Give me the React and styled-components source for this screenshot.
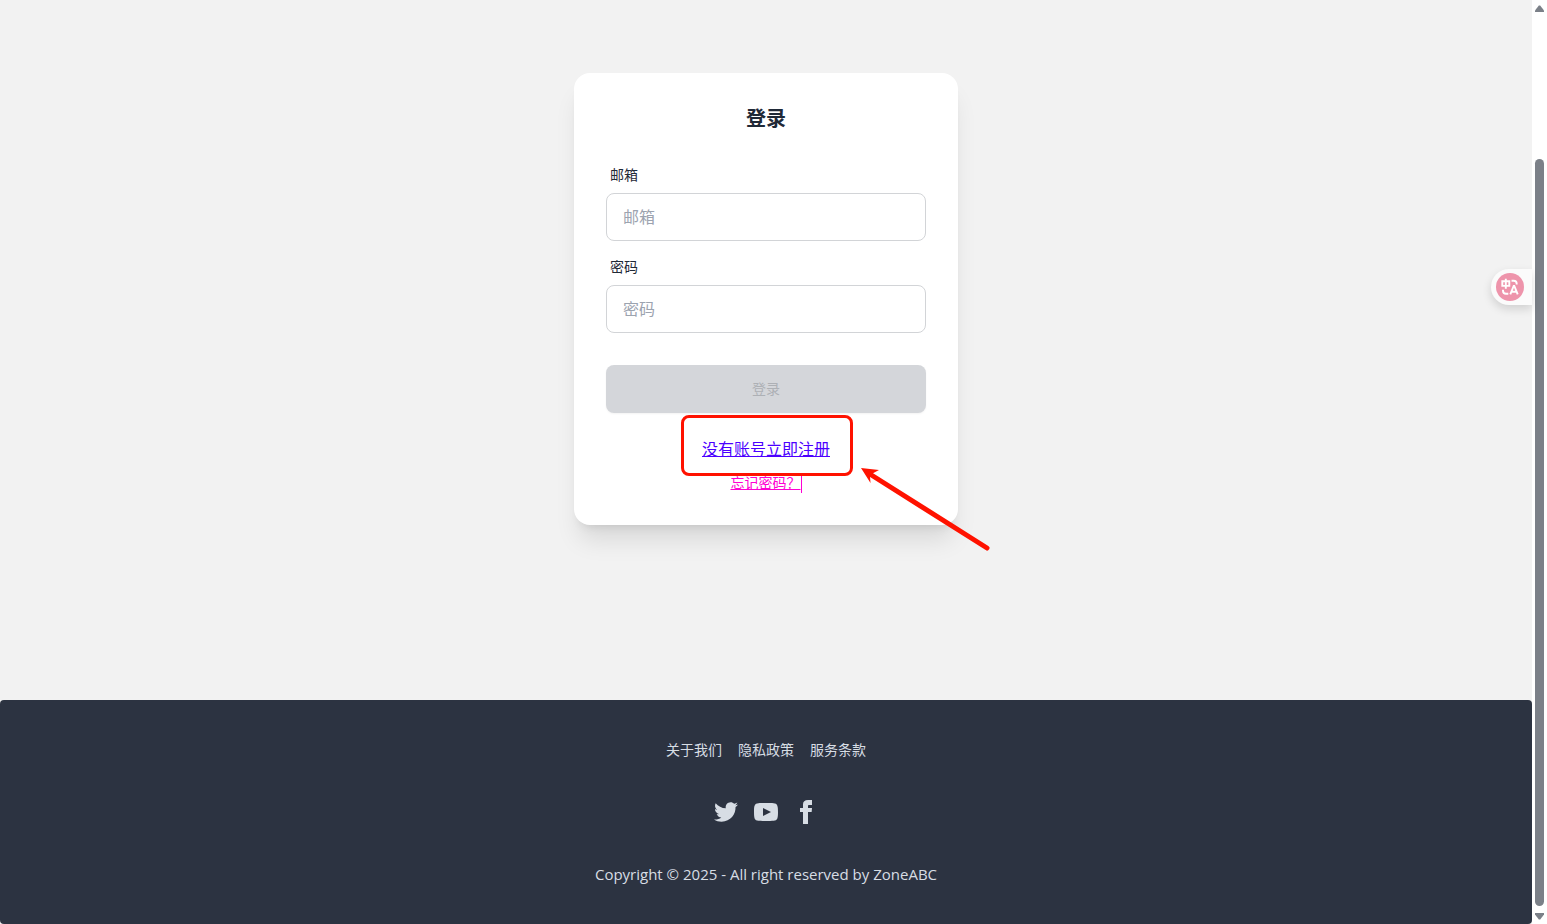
import React from "react";
import styled, { createGlobalStyle } from "styled-components";

const GlobalStyle = createGlobalStyle`
  *, *::before, *::after {
    box-sizing: border-box;
  }

  body {
    margin: 0;
    background: #ffffff;
    color: #1f2937;
    font-family: "Open Sans", "Noto Sans CJK SC", sans-serif;
    font-size: 16px;
    line-height: 24px;
  }
`;

const Window = styled.div`
  display: flex;
  min-height: 100vh;
`;

const Page = styled.div`
  position: relative;
  flex: 1;
  display: flex;
  flex-direction: column;
  background: #f2f2f2;
`;

const Main = styled.main`
  flex: 1;
  display: flex;
  justify-content: center;
  align-items: flex-start;
  padding: 73px 16px 64px;
`;

const Card = styled.div`
  position: relative;
  width: 100%;
  max-width: 384px;
  padding: 32px;
  border-radius: 16px;
  background: #ffffff;
  box-shadow: 0 20px 25px -5px rgba(0, 0, 0, 0.1),
    0 8px 10px -6px rgba(0, 0, 0, 0.1);
`;

const Title = styled.h1`
  margin: 0 0 24px;
  font-size: 20px;
  line-height: 28px;
  font-weight: 700;
  text-align: center;
`;

const Form = styled.form`
  display: flex;
  flex-direction: column;
  gap: 8px;
`;

const Field = styled.div`
  display: flex;
  flex-direction: column;
`;

const Label = styled.label`
  padding: 8px 4px;
  font-size: 14px;
  line-height: 20px;
`;

const Input = styled.input`
  width: 100%;
  height: 48px;
  padding: 0 16px;
  border: 1px solid #d2d4d7;
  border-radius: 8px;
  background: #ffffff;
  color: inherit;
  font: inherit;

  &::placeholder {
    color: #9ca3af;
    opacity: 1;
  }
`;

const SubmitButton = styled.button`
  height: 48px;
  margin-top: 24px;
  border: 0;
  border-radius: 8px;
  background: #d4d6da;
  color: #adb0b5;
  font-family: inherit;
  font-size: 14px;
  line-height: 20px;
  box-shadow: 0 1px 2px rgba(0, 0, 0, 0.05);
`;

const Links = styled.div`
  display: flex;
  flex-direction: column;
  align-items: center;
  gap: 12px;
  margin-top: 24px;
`;

const RegisterLink = styled.a`
  color: #4b00ff;
  text-decoration: underline;
`;

const ForgotLink = styled.a`
  border-right: 1px solid #ff00d3;
  color: #ff00d3;
  font-size: 14px;
  line-height: 20px;
  text-decoration: underline;
`;

const Highlight = styled.div`
  position: absolute;
  top: 342px;
  left: 107px;
  width: 172px;
  height: 61px;
  border: 3px solid #ff1200;
  border-radius: 8px;
  pointer-events: none;
`;

const Arrow = styled.svg`
  position: absolute;
  top: 391px;
  left: 284px;
  pointer-events: none;
`;

const FooterBar = styled.footer`
  display: flex;
  flex-direction: column;
  align-items: center;
  gap: 40px;
  padding: 40px;
  border-radius: 4px;
  background: #2c3341;
  color: #d7dde4;
  font-size: 14px;
  line-height: 20px;
`;

const FooterNav = styled.nav`
  display: flex;
  gap: 16px;
`;

const FooterLink = styled.a`
  display: flex;
  color: inherit;
  text-decoration: none;
`;

const Copyright = styled.p`
  margin: 0;
  font-size: 15px;
`;

const TranslateButton = styled.button`
  position: absolute;
  top: 269px;
  right: 0;
  display: flex;
  align-items: center;
  width: 41px;
  height: 36px;
  padding: 0 0 0 5px;
  border: 0;
  border-radius: 18px 0 0 18px;
  background: #fbfbfb;
  box-shadow: 0 4px 10px rgba(0, 0, 0, 0.14);
`;

const Scrollbar = styled.div`
  display: flex;
  flex-direction: column;
  align-items: center;
  justify-content: space-between;
  width: 15px;
  padding: 5px 0 4px;
  background: #ffffff;
`;

const Thumb = styled.div`
  flex: 1;
  width: 9px;
  margin: 147px 0 7px;
  border-radius: 5px;
  background: #7b8088;
`;

const socials = [
  {
    name: "Twitter",
    path: "M24 4.557c-.883.392-1.832.656-2.828.775 1.017-.609 1.798-1.574 2.165-2.724-.951.564-2.005.974-3.127 1.195-.897-.957-2.178-1.555-3.594-1.555-3.179 0-5.515 2.966-4.797 6.045-4.091-.205-7.719-2.165-10.148-5.144-1.29 2.213-.669 5.108 1.523 6.574-.806-.026-1.566-.247-2.229-.616-.054 2.281 1.581 4.415 3.949 4.89-.693.188-1.452.232-2.224.084.626 1.956 2.444 3.379 4.6 3.419-2.07 1.623-4.678 2.348-7.29 2.04 2.179 1.397 4.768 2.212 7.548 2.212 9.142 0 14.307-7.721 13.995-14.646.962-.695 1.797-1.562 2.457-2.549z"
  },
  {
    name: "YouTube",
    path: "M19.615 3.184c-3.604-.246-11.631-.245-15.23 0-3.897.266-4.356 2.62-4.385 8.816.029 6.185.484 8.549 4.385 8.816 3.6.245 11.626.246 15.23 0 3.897-.266 4.356-2.62 4.385-8.816-.029-6.185-.484-8.549-4.385-8.816zm-10.615 12.816v-8l8 3.993-8 4.007z"
  },
  {
    name: "Facebook",
    path: "M9 8h-3v4h3v12h5v-12h3.642l.358-4h-4v-1.667c0-.955.192-1.333 1.115-1.333h2.885v-5h-3.808c-3.596 0-5.192 1.583-5.192 4.615v3.385z"
  }
];

function LoginCard() {
  return (
    <Card>
      <Title>登录</Title>
      <Form onSubmit={event => event.preventDefault()}>
        <Field>
          <Label htmlFor="email">邮箱</Label>
          <Input id="email" type="email" placeholder="邮箱" />
        </Field>
        <Field>
          <Label htmlFor="password">密码</Label>
          <Input id="password" type="password" placeholder="密码" />
        </Field>
        <SubmitButton type="submit" disabled>
          登录
        </SubmitButton>
      </Form>
      <Links>
        <RegisterLink href="#register">没有账号立即注册</RegisterLink>
        <ForgotLink href="#forgot">忘记密码？</ForgotLink>
      </Links>
      <Highlight />
      <Arrow width="136" height="90" viewBox="0 0 136 90" aria-hidden="true">
        <path
          d="M11 9.5L129 84"
          stroke="#ff1200"
          strokeWidth="5"
          strokeLinecap="round"
        />
        <path d="M3 4L21 6L14.5 9.5L12 12.5L12.5 19Z" fill="#ff1200" />
      </Arrow>
    </Card>
  );
}

function Footer() {
  return (
    <FooterBar>
      <FooterNav>
        <FooterLink href="#about">关于我们</FooterLink>
        <FooterLink href="#privacy">隐私政策</FooterLink>
        <FooterLink href="#terms">服务条款</FooterLink>
      </FooterNav>
      <FooterNav>
        {socials.map(social => (
          <FooterLink
            key={social.name}
            href={`#${social.name}`}
            aria-label={social.name}
          >
            <svg width="24" height="24" viewBox="0 0 24 24" fill="currentColor">
              <path d={social.path} />
            </svg>
          </FooterLink>
        ))}
      </FooterNav>
      <Copyright>Copyright © 2025 - All right reserved by ZoneABC</Copyright>
    </FooterBar>
  );
}

function TranslateIcon() {
  return (
    <svg width="28" height="28" viewBox="0 0 28 28" fill="none">
      <circle cx="14" cy="14" r="14" fill="#ee94ab" />
      <g stroke="#ffffff" strokeWidth="1.9">
        <path d="M6.3 8.3h7v4.6h-7zM9.8 5.8v10" />
        <path d="M15.5 7.8h2.2q3 0 3 3v.8" />
        <path d="M7 16.8v1q0 3 3 3h2.3" />
        <path d="M14.3 21.3l3.4-8.4h.6l3.4 8.4M15.5 18.7h5" />
      </g>
    </svg>
  );
}

function App() {
  return (
    <>
      <GlobalStyle />
      <Window>
        <Page>
          <Main>
            <LoginCard />
          </Main>
          <Footer />
          <TranslateButton type="button" aria-label="翻译">
            <TranslateIcon />
          </TranslateButton>
        </Page>
        <Scrollbar aria-hidden="true">
          <svg width="9" height="7" viewBox="0 0 9 7" fill="#7b8088">
            <path d="M3.8.4h1.4L9 5.6V7H0V5.6z" />
          </svg>
          <Thumb />
          <svg width="9" height="7" viewBox="0 0 9 7" fill="#7b8088">
            <path d="M0 0h9v1.4L5.2 6.6H3.8L0 1.4z" />
          </svg>
        </Scrollbar>
      </Window>
    </>
  );
}

export default App;
